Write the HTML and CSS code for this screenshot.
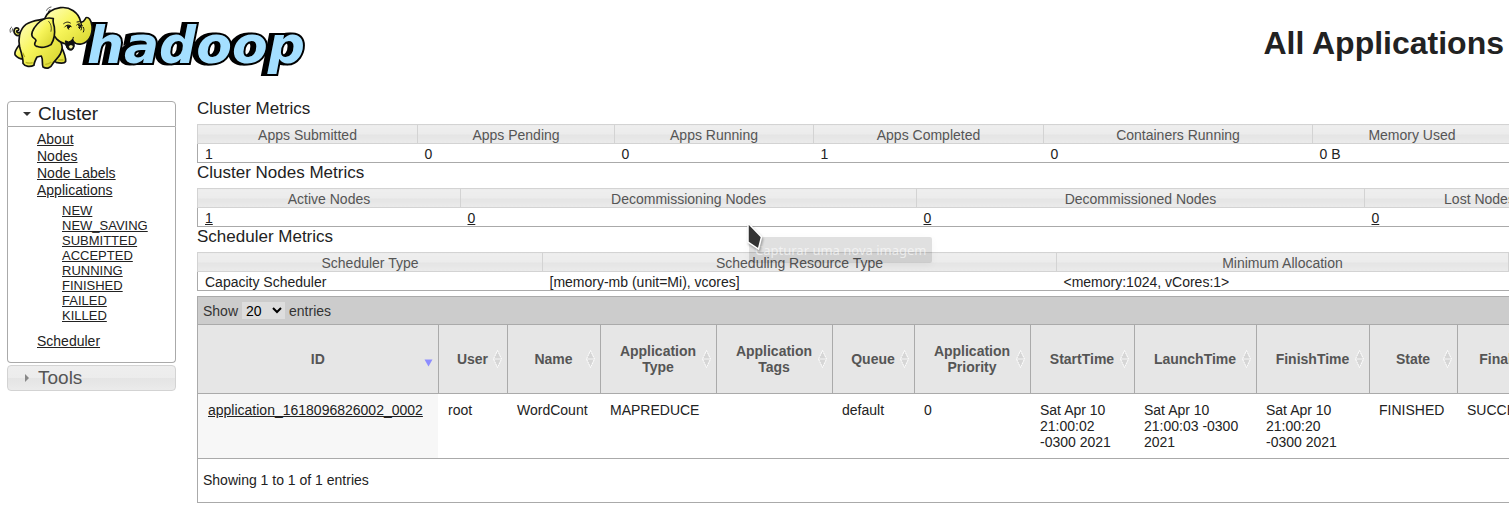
FILE: index.html
```html
<!DOCTYPE html>
<html lang="en">
<head>
<meta charset="utf-8">
<title>All Applications</title>
<link rel="stylesheet" href="styles.css">
</head>
<body>
<svg class="defs" aria-hidden="true">
  <symbol id="sort" viewBox="0 0 9 18">
    <path d="M4.5 1L8.300 8.500H.7zM4.500 17L8.300 9.500H.7z" fill="#d6d6d6"/>
    <path d="M4.500 .5L8.500 9L4.500 17.500L.5 9z" fill="none" stroke="#fff" stroke-dasharray="2 .6"/>
    <path d="M1 9h7" stroke="#eee"/>
  </symbol>
</svg>
<header class="top">
  <a class="logo" href="#" aria-label="Hadoop">
    <svg class="logo-art" viewBox="0 0 310 90">
      <text class="wordmark" x="87" y="63">hadoop</text>
      <svg width="100" height="90" viewBox="0 0 300 270">
        <defs>
          <linearGradient id="skin" x1="0" y1="0" x2="1" y2="1">
            <stop offset="0" stop-color="#ffffc4"/>
            <stop offset=".45" stop-color="#f7f55a"/>
            <stop offset="1" stop-color="#d2cf28"/>
          </linearGradient>
        </defs>
        <g stroke="#111" stroke-width="5" stroke-linejoin="round" stroke-linecap="round" fill="url(#skin)">
          <path d="M61 105C49 111 39 99 43 89C48 78 60 86 55 91C52 94 50 90 50 95C53 101 58 98 64 94"/>
          <path d="M57 136C48 148 43 158 45 164C52 174 61 177 72 177L80 150z"/>
          <path d="M160 165C165 178 164 187 168 187C180 190 194 190 197 184C198 170 190 153 184 140z"/>
          <path d="M132 57C114 61 97 61 78 73C57 89 54 119 59 142C65 160 70 174 69 190C75 201 92 201 102 196C102 188 104 184 111 171L124 168C130 180 125 193 129 201C141 208 152 204 157 193C162 184 174 175 181 162C189 145 187 139 183 126L160 75z"/>
          <path d="M133 58C140 38 159 26 181 23C208 19 237 37 242 66C251 69 253 61 258 53C266 50 274 61 276 78C279 108 264 128 244 132C233 134 224 130 218 123C223 136 222 146 213 149C202 149 201 139 197 132C176 128 160 111 157 91z"/>
          <path d="M160 56C141 50 125 58 112 72C97 88 91 105 99 112C105 116 108 119 108 122C102 132 103 137 110 139C123 145 141 142 153 134C161 122 166 104 163 81C160 71 158 63 160 56z"/>
          <path d="M197 124C207 130 216 125 218 119C223 132 224 142 216 148C205 151 200 143 200 136z" fill="#111"/>
          <path d="M206 140C209 133 216 134 219 139C217 147 210 149 206 140z" fill="#f6f3a1" stroke-width="1"/>
          <path d="M194 81C199 74 208 73 214 80C205 76 202 83 206 88M191 71C199 65 205 65 211 69M230 75C236 69 243 71 247 76M231 66L238 65M242 66C247 75 246 83 243 90M236 82L239 86M208 125C216 122 219 118 220 112M250 96C253 90 252 87 250 82" fill="none" stroke-width="3"/>
          <path d="M202 77L212 79L205 85zM236 74L243 77L240 83z" fill="#111" stroke-width="3"/>
          <path d="M140 31C142 25 147 22 153 21M145 35L150 28M31 97C29 90 30 84 35 81M36 94L38 86M146 64C153 71 156 83 153 94" fill="none" stroke-width="2"/>
        </g>
        <path d="M77 187C85 190 92 190 98 188M136 193C144 193 149 190 154 186M175 180L190 180M68 158L74 171" stroke="#b7b220" stroke-width="4" fill="none"/>
      </svg>
    </svg>
  </a>
  <h1 class="title">All Applications</h1>
</header>
<div class="layout">
  <nav class="side" aria-label="Cluster navigation">
    <button class="side-head open" type="button" aria-expanded="true">
      <svg class="caret" viewBox="0 0 16 16"><path d="M4 6h8l-4 4z" fill="#333"/></svg>Cluster</button>
    <div class="side-body">
      <ul class="links">
        <li><a href="#">About</a></li>
        <li><a href="#">Nodes</a></li>
        <li><a href="#">Node Labels</a></li>
        <li><a href="#">Applications</a>
          <ul class="sublinks">
            <li><a href="#">NEW</a></li>
            <li><a href="#">NEW_SAVING</a></li>
            <li><a href="#">SUBMITTED</a></li>
            <li><a href="#">ACCEPTED</a></li>
            <li><a href="#">RUNNING</a></li>
            <li><a href="#">FINISHED</a></li>
            <li><a href="#">FAILED</a></li>
            <li><a href="#">KILLED</a></li>
          </ul>
        </li>
        <li><a href="#">Scheduler</a></li>
      </ul>
    </div>
    <button class="side-head closed" type="button" aria-expanded="false">
      <svg class="caret" viewBox="0 0 16 16"><path d="M6 4v8l4-4z" fill="#888"/></svg>Tools</button>
  </nav>
  <main class="content">
    <h2 class="caption">Cluster Metrics</h2>
    <table class="metrics">
      <colgroup><col class="w220"><col class="w197"><col class="w199"><col class="w230"><col class="w269"><col class="w199"></colgroup>
      <thead><tr><th>Apps Submitted</th><th>Apps Pending</th><th>Apps Running</th><th>Apps Completed</th><th>Containers Running</th><th>Memory Used</th></tr></thead>
      <tbody><tr><td>1</td><td>0</td><td>0</td><td>1</td><td>0</td><td>0 B</td></tr></tbody>
    </table>
    <h2 class="caption">Cluster Nodes Metrics</h2>
    <table class="metrics">
      <colgroup><col class="w263"><col class="w456"><col class="w448"><col class="w230"></colgroup>
      <thead><tr><th>Active Nodes</th><th>Decommissioning Nodes</th><th>Decommissioned Nodes</th><th>Lost Nodes</th></tr></thead>
      <tbody><tr><td><a href="#">1</a></td><td><a href="#">0</a></td><td><a href="#">0</a></td><td><a href="#">0</a></td></tr></tbody>
    </table>
    <h2 class="caption">Scheduler Metrics</h2>
    <table class="metrics">
      <colgroup><col class="w345"><col class="w514"><col class="w452"><col class="w220"></colgroup>
      <thead><tr><th>Scheduler Type</th><th>Scheduling Resource Type</th><th>Minimum Allocation</th><th></th></tr></thead>
      <tbody><tr><td>Capacity Scheduler</td><td>[memory-mb (unit=Mi), vcores]</td><td>&lt;memory:1024, vCores:1&gt;</td><td></td></tr></tbody>
    </table>
    <section class="apps">
      <div class="toolbar">
        <label for="length">Show</label>
        <select id="length"><option>20</option><option>40</option><option>60</option></select>
        <span>entries</span>
      </div>
      <table class="grid">
        <colgroup><col class="w240"><col class="w69"><col class="w93"><col class="w116"><col class="w116"><col class="w82"><col class="w116"><col class="w104"><col class="w122"><col class="w113"><col class="w88"><col class="w120"></colgroup>
        <thead><tr>
          <th><button type="button"><span>ID</span><svg class="sort" viewBox="0 0 9 18"><path d="M.5 9.500h8l-4 7z" fill="#8d8dff"/></svg></button></th>
          <th><button type="button"><span>User</span><svg class="sort"><use href="#sort"/></svg></button></th>
          <th><button type="button"><span>Name</span><svg class="sort"><use href="#sort"/></svg></button></th>
          <th><button type="button"><span>Application Type</span><svg class="sort"><use href="#sort"/></svg></button></th>
          <th><button type="button"><span>Application Tags</span><svg class="sort"><use href="#sort"/></svg></button></th>
          <th><button type="button"><span>Queue</span><svg class="sort"><use href="#sort"/></svg></button></th>
          <th><button type="button"><span>Application Priority</span><svg class="sort"><use href="#sort"/></svg></button></th>
          <th><button type="button"><span>StartTime</span><svg class="sort"><use href="#sort"/></svg></button></th>
          <th><button type="button"><span>LaunchTime</span><svg class="sort"><use href="#sort"/></svg></button></th>
          <th><button type="button"><span>FinishTime</span><svg class="sort"><use href="#sort"/></svg></button></th>
          <th><button type="button"><span>State</span><svg class="sort"><use href="#sort"/></svg></button></th>
          <th><button type="button"><span>FinalStatus</span><svg class="sort"><use href="#sort"/></svg></button></th>
        </tr></thead>
        <tbody><tr>
          <td class="sorted"><a href="#">application_1618096826002_0002</a></td>
          <td>root</td><td>WordCount</td><td>MAPREDUCE</td><td></td><td>default</td><td>0</td>
          <td>Sat Apr 10 21:00:02 -0300 2021</td><td>Sat Apr 10 21:00:03 -0300 2021</td><td>Sat Apr 10 21:00:20 -0300 2021</td>
          <td>FINISHED</td><td>SUCCEEDED</td>
        </tr></tbody>
      </table>
      <div class="info">Showing 1 to 1 of 1 entries</div>
    </section>
  </main>
</div>
<div class="tip" role="tooltip">Capturar uma nova imagem</div>
<svg class="pointer" viewBox="0 0 20 32" aria-hidden="true"><path d="M3 3L16.500 17L13.500 29L3 22z" fill="#333" stroke="#fff" stroke-width="1.500"/></svg>
</body>
</html>
```
FILE: styles.css
```css
* { box-sizing: border-box; }
body {
  margin: 0;
  overflow-x: hidden;
  font: 14px/16px "Liberation Sans", Arial, sans-serif;
  color: #222;
  background: #fff;
}
a { color: #222; }
button { font: inherit; color: inherit; }
.defs { position: absolute; width: 0; height: 0; }

.top { display: flex; justify-content: space-between; align-items: center; height: 90px; padding-right: 5px; }
.logo { width: 310px; height: 90px; text-decoration: none; }
.logo-art { display: block; width: 100%; height: 100%; }
.wordmark {
  font: italic bold 52px "DejaVu Sans", Verdana, sans-serif;
  fill: #a4dfff;
  stroke: #000;
  stroke-width: 4px;
  stroke-linejoin: miter;
  paint-order: stroke;
  filter: drop-shadow(-4px 0 0 #000);
}
.title { margin: 0; font-size: 32px; line-height: 36px; padding-bottom: 4px; }

.layout { display: flex; gap: 21px; padding: 9px 0 0 7px; }
.side { flex: none; width: 169px; padding-top: 2px; }
.side-head {
  display: flex;
  align-items: center;
  gap: 3px;
  width: 100%;
  height: 26px;
  padding: 0 11px;
  border: 1px solid #aaa;
  border-radius: 4px;
  font-size: 19px;
  line-height: 24px;
}
.caret { width: 16px; height: 16px; }
.open { background: #fff; border-radius: 4px 4px 0 0; }
.closed {
  margin-top: 2px;
  border-color: #d3d3d3;
  color: #555;
  background: linear-gradient(#eee, #ececec 50%, #e4e4e4 50%, #ebebeb);
}
.side-body { padding: 4px 0 12px 29px; border: 1px solid #aaa; border-top: 0; border-radius: 0 0 4px 4px; }
.links, .sublinks { margin: 0; padding: 0; list-style: none; }
.links { line-height: 17px; }
.sublinks { padding: 4px 0 10px 25px; font-size: 13px; line-height: 15px; }

.content { flex: 1; min-width: 0; }
.caption { margin: 0; padding-bottom: 6px; font-size: 17px; font-weight: 400; line-height: 19px; }
table { table-layout: fixed; width: 0; border-collapse: collapse; }
.metrics th, .metrics td { height: 19px; padding: 2px 7px 0; line-height: 16px; white-space: nowrap; }
.metrics th {
  border: 1px solid #d3d3d3;
  font-weight: 400;
  color: #555;
  background: linear-gradient(#eee, #ececec 50%, #e4e4e4 50%, #ebebeb);
}
.metrics tbody { border: 1px solid #aaa; border-top: 0; }

.apps { width: 1380px; margin-top: 5px; border: 1px solid #aaa; }
.toolbar { display: flex; align-items: center; gap: 4px; height: 27px; padding-left: 5px; background: #ccc; color: #333; }
.toolbar select { width: 43px; height: 17px; padding: 0; border: 0; border-radius: 0; font: inherit; color: #000; background: #ddd; }
.grid th { height: 69px; padding: 0; border: 1px solid #aaa; color: #555; background: #e6e6e6; }
.grid th:first-child { border-left: 0; }
.grid th button {
  display: grid;
  grid-template-columns: 16px 1fr 16px;
  align-items: center;
  width: 100%;
  padding: 0;
  border: 0;
  background: none;
  font-weight: 700;
}
.grid th span { grid-column: 2; }
.sort { width: 9px; height: 18px; margin-right: 5px; justify-self: end; }
.grid td { height: 65px; padding: 8px 10px; border-bottom: 1px solid #aaa; vertical-align: top; }
.grid .sorted { background: #f7f7f7; }
.info { padding: 13px 5px 14px; }

.w69 { width: 69px; }
.w82 { width: 82px; }
.w88 { width: 88px; }
.w93 { width: 93px; }
.w104 { width: 104px; }
.w113 { width: 113px; }
.w116 { width: 116px; }
.w120 { width: 120px; }
.w122 { width: 122px; }
.w197 { width: 197px; }
.w199 { width: 199px; }
.w220 { width: 220px; }
.w230 { width: 230px; }
.w240 { width: 240px; }
.w263 { width: 263px; }
.w269 { width: 269px; }
.w345 { width: 345px; }
.w448 { width: 448px; }
.w452 { width: 452px; }
.w456 { width: 456px; }
.w514 { width: 514px; }

.tip {
  position: absolute;
  left: 749px;
  top: 237px;
  padding: 4px 6px;
  border-radius: 2px;
  font: 13px/18px "Noto Sans", sans-serif;
  color: rgba(255, 255, 255, .6);
  background: rgba(0, 0, 0, .12);
  box-shadow: 0 2px 8px rgba(0, 0, 0, .04);
}
.pointer { position: absolute; left: 745px; top: 220px; width: 20px; height: 32px; filter: drop-shadow(1px 2px 1px rgba(0, 0, 0, .3)); }
```
